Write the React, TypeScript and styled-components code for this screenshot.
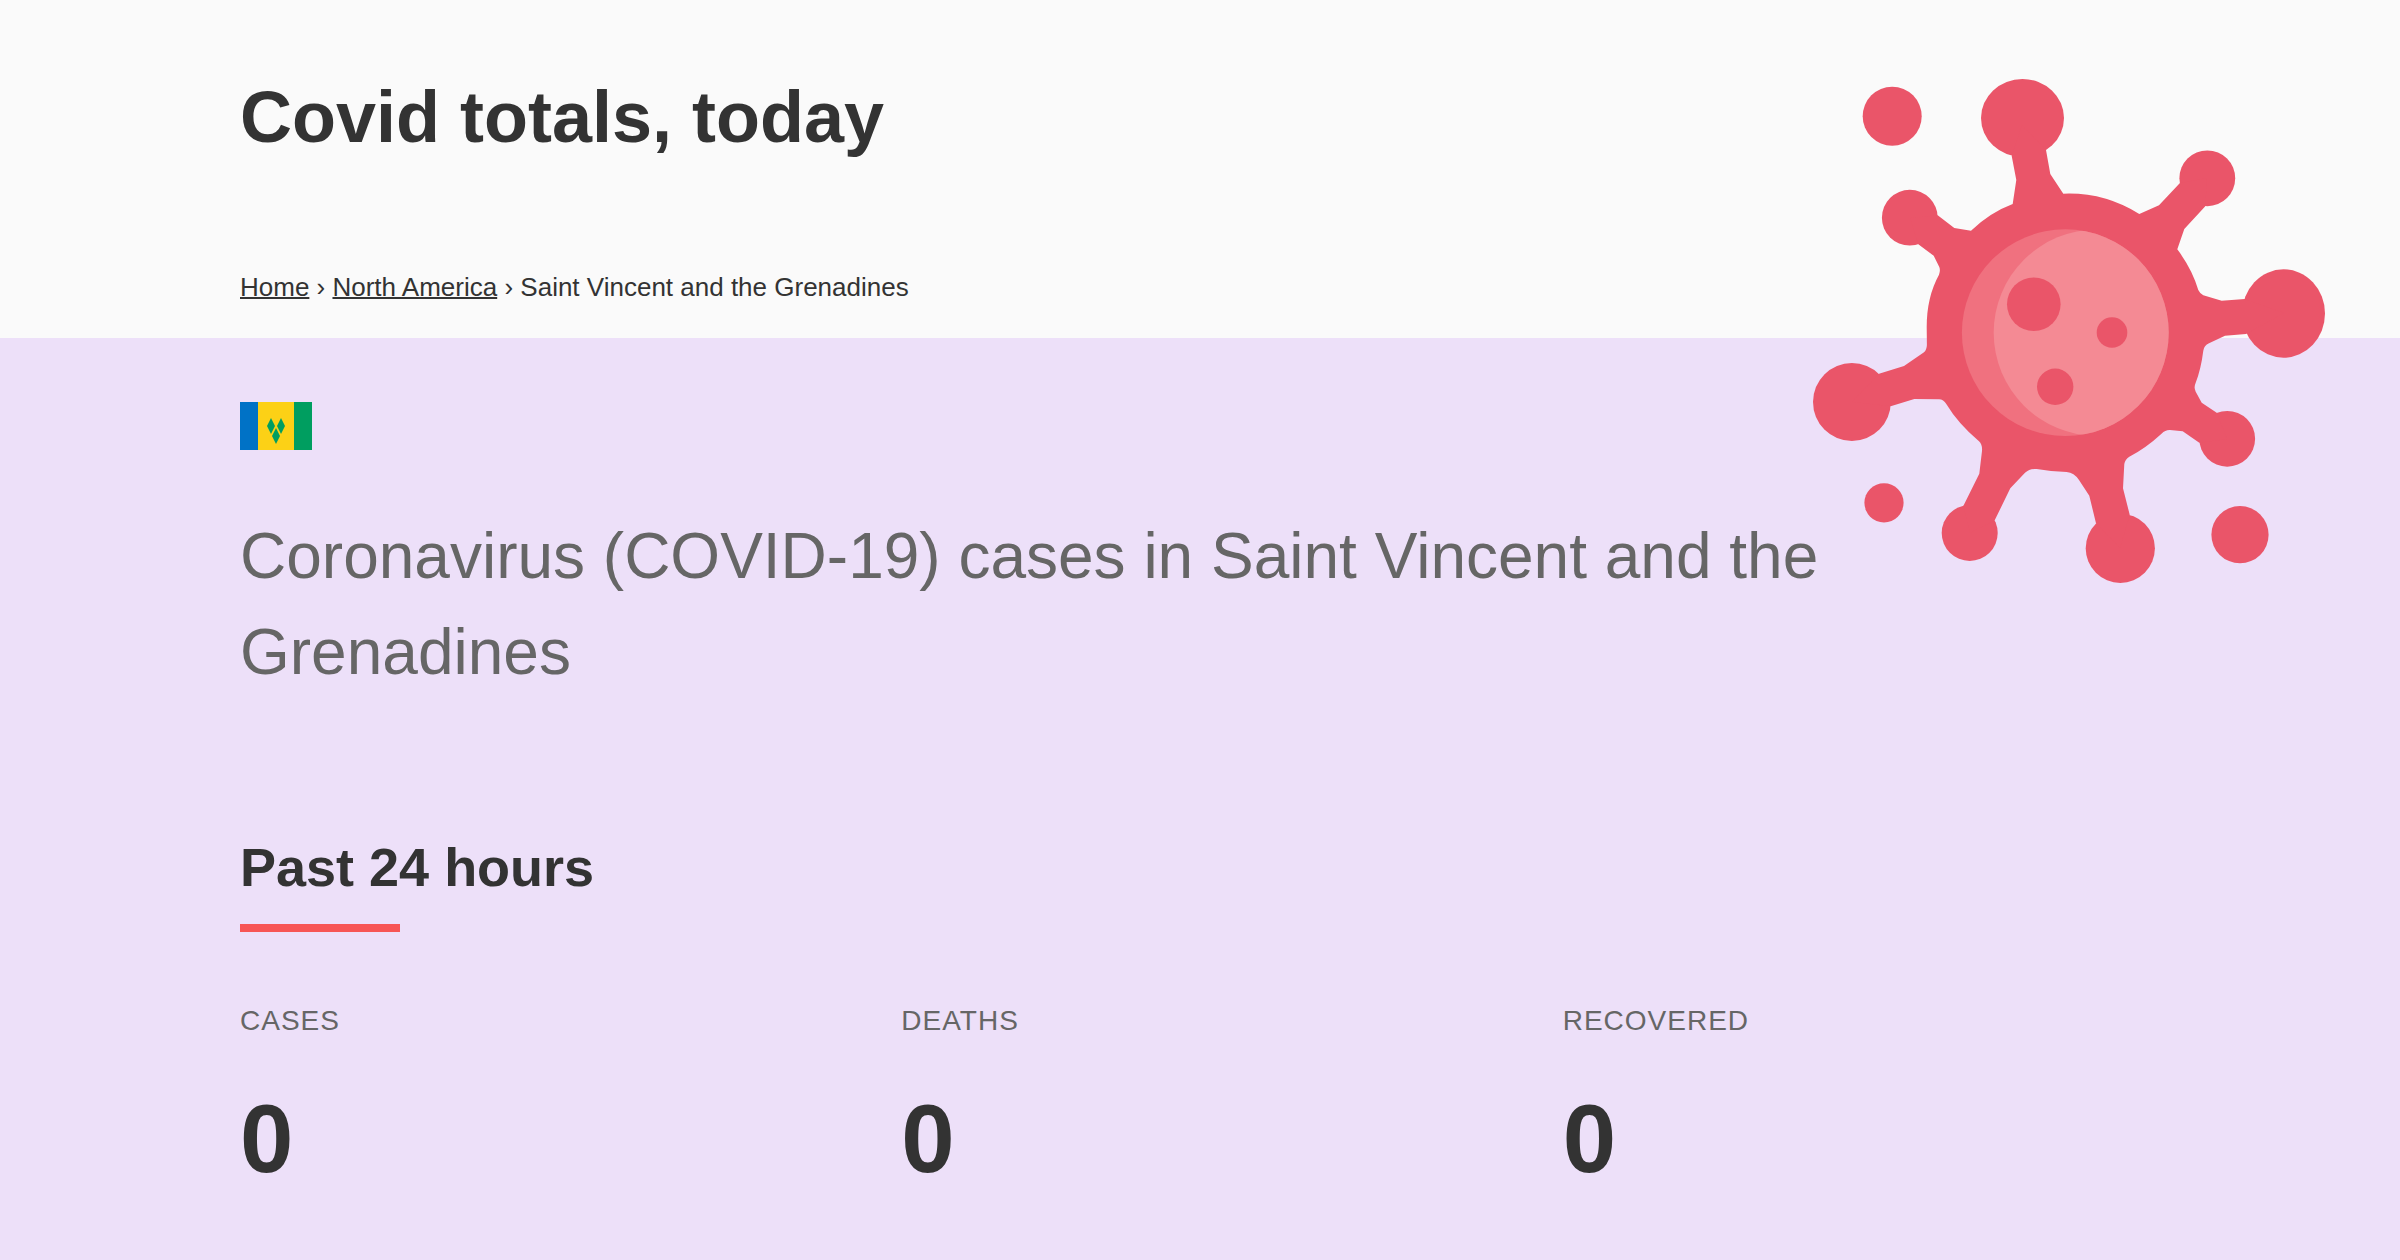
import React from "react";
import styled, { createGlobalStyle } from "styled-components";

const colors = {
  page: "#fafafa",
  panel: "#ede0f9",
  text: "#333333",
  muted: "#666666",
  accent: "#f75555",
  virus: "#ea5569",
  virusMid: "#f0717f",
  virusLight: "#f48a94",
};

const GlobalStyle = createGlobalStyle`
  *, *::before, *::after { box-sizing: border-box; }
  html { background: ${colors.panel}; }
  body {
    margin: 0;
    color: ${colors.text};
    font-family: "Liberation Sans", Arial, Helvetica, sans-serif;
    font-size: 26px;
    line-height: 1.5;
  }
`;

const Page = styled.div`
  position: relative;
  min-height: 100vh;
  overflow: hidden;
  background: ${colors.panel};
`;

const Container = styled.div`
  width: 80%;
  margin: 0 auto;
`;

const Header = styled.header`
  padding: 63px 0 31px;
  background: ${colors.page};
`;

const SiteTitle = styled.h1`
  margin: 0 0 97px;
  font-size: 72px;
  line-height: 108px;
`;

const Breadcrumbs = styled.nav`
  line-height: 39px;
`;

const Crumb = styled.a`
  color: inherit;
  text-decoration: underline;
  text-decoration-thickness: 2px;
`;

const Main = styled.main`
  padding: 64px 0 48px;
`;

const Flag = styled.svg`
  display: block;
  width: 72px;
  height: 48px;
`;

const Subtitle = styled.h2`
  margin: 58px 0 127px;
  color: ${colors.muted};
  font-size: 64px;
  font-weight: 400;
  line-height: 96px;
`;

const SectionTitle = styled.h3`
  margin: 0 0 68px;
  font-size: 54px;
  line-height: 81px;

  &::after {
    content: "";
    display: block;
    width: 160px;
    height: 8px;
    margin-top: 16px;
    background: ${colors.accent};
  }
`;

const Stats = styled.dl`
  display: grid;
  grid-template-columns: repeat(3, 1fr);
  gap: 64px;
  margin: 0;
`;

const StatLabel = styled.dt`
  margin-bottom: 25px;
  color: ${colors.muted};
  font-size: 28px;
  line-height: 42px;
  letter-spacing: 1px;
  text-transform: uppercase;
`;

const StatValue = styled.dd`
  margin: 0;
  font-size: 96px;
  font-weight: 700;
  line-height: 144px;
`;

const VirusArt = styled.svg`
  position: absolute;
  top: 75px;
  right: 75px;
  width: 512px;
  height: 512px;
  pointer-events: none;
`;

const Virus = () => (
  <VirusArt viewBox="0 0 512 512" aria-hidden="true">
    <defs>
      <clipPath id="core">
        <circle cx="252.3" cy="257.7" r="103.4" />
      </clipPath>
    </defs>
    <g fill={colors.virus}>
      <circle cx="79.2" cy="41.2" r="29.5" />
      <ellipse cx="209.5" cy="43" rx="41.5" ry="39" />
      <circle cx="96.8" cy="142.7" r="27.9" />
      <circle cx="394.3" cy="103.3" r="27.9" />
      <ellipse cx="470.6" cy="238.5" rx="41.4" ry="44.2" />
      <circle cx="38.9" cy="327" r="38.9" />
      <circle cx="71" cy="427.8" r="19.6" />
      <circle cx="156.7" cy="458" r="28" />
      <circle cx="307.3" cy="473.3" r="34.6" />
      <circle cx="414.2" cy="363.8" r="27.9" />
      <circle cx="427" cy="459.7" r="28.6" />
      <path
        d="M209 50 L198.7 81 L203.3 105 L199.7 129 Q177 137.500 158 155.700 L141.300 153 L124.700 140.300
          L97 143 L105.300 169.300 L120.700 180.700 L126.300 192 Q127.600 195.500 126 199.700
          Q113.700 222 113.700 252 L113.900 270 Q113.700 275 111 277.300 L91 291 L66 298.700
          L39 327 L77.700 331.300 L101.300 324 L126 324.300 Q130.500 324.500 133.300 329
          Q145 348.500 166 366.300 Q169.500 369.500 169 376 L166.300 398.700 L150.300 431
          L157 458 L181.700 445.300 L197.300 413.300 L212 397.700 Q217 393.200 223.700 394
          Q238 396.600 253.700 397 Q261 397.500 266 405 L276.300 420.700 L283 448.300
          L307 473 L316.700 439.700 L310 413.300 L311.300 389 Q312 384.500 316.300 381.700
          Q333 373 348.500 358.700 Q352.500 354.700 357 355 L369.700 356.300 L386.300 367.700
          L414 364 L403.700 337.700 L388.700 327.700 L382.700 316.700 Q380.500 312.500 382.700 307.700
          Q388 294 390.300 275.700 Q391 270.500 396 268.300 L412 260.700 L433 259
          L471 238 L431.700 224 L408.700 225.700 L390.300 220.300 Q386.500 218 385.300 215
          Q379 194 364.300 174.300 L371.300 154 L392.300 131.300 L394 103 L366.700 108.300
          L346 130.300 L326.300 139 Q291 117 250.300 118.700 L237.300 99 L233 75 Z"
      />
    </g>
    <circle cx="252.3" cy="257.7" r="103.4" fill={colors.virusMid} />
    <circle cx="283.9" cy="257.7" r="103.2" fill={colors.virusLight} clipPath="url(#core)" />
    <g fill={colors.virus}>
      <circle cx="220.8" cy="229.3" r="26.8" />
      <circle cx="299" cy="257.5" r="15.3" />
      <circle cx="242.2" cy="311.8" r="18.2" />
    </g>
  </VirusArt>
);

const CountryFlag = () => (
  <Flag viewBox="0 0 72 48" role="img" aria-label="Flag of Saint Vincent and the Grenadines">
    <rect width="72" height="48" fill="#fcd116" />
    <rect width="18" height="48" fill="#0072c6" />
    <rect x="54" width="18" height="48" fill="#009e60" />
    <path
      fill="#009e60"
      d="M31 16 L35 24 L31 32 L27 24 Z M41 16 L45 24 L41 32 L37 24 Z M36 26 L40 34 L36 42 L32 34 Z"
    />
  </Flag>
);

const stats = [
  { label: "Cases", value: 0 },
  { label: "Deaths", value: 0 },
  { label: "Recovered", value: 0 },
];

export default function App() {
  return (
    <Page>
      <GlobalStyle />
      <Header>
        <Container>
          <SiteTitle>Covid totals, today</SiteTitle>
          <Breadcrumbs aria-label="Breadcrumb">
            <Crumb href="#home">Home</Crumb> › <Crumb href="#north-america">North America</Crumb> ›{" "}
            <span aria-current="page">Saint Vincent and the Grenadines</span>
          </Breadcrumbs>
        </Container>
      </Header>
      <Main>
        <Container>
          <CountryFlag />
          <Subtitle>Coronavirus (COVID-19) cases in Saint Vincent and the Grenadines</Subtitle>
          <section aria-labelledby="past-day">
            <SectionTitle id="past-day">Past 24 hours</SectionTitle>
            <Stats>
              {stats.map((stat) => (
                <div key={stat.label}>
                  <StatLabel>{stat.label}</StatLabel>
                  <StatValue>{stat.value}</StatValue>
                </div>
              ))}
            </Stats>
          </section>
        </Container>
      </Main>
      <Virus />
    </Page>
  );
}
